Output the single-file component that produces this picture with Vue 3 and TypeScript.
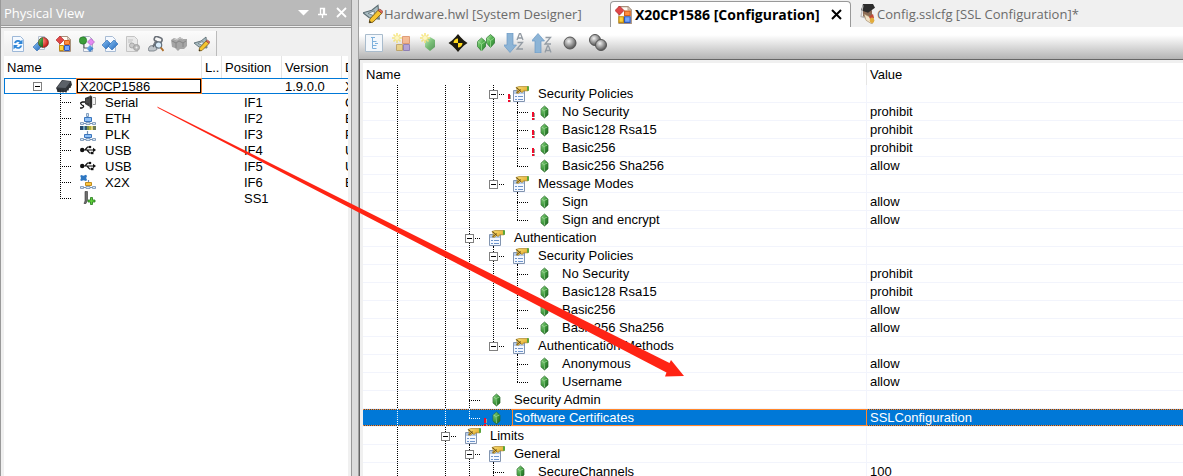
<script setup lang="ts">
import { ref } from 'vue'

interface Device {
  name: string
  icon: string
  position: string
  description: string
}

interface Setting {
  name: string
  value?: string
  level: number
  guides: number[]
  group?: boolean
  last?: boolean
  alert?: boolean
}

const physicalTools = [
  { icon: 'refresh', label: 'Refresh' },
  { icon: 'sphere', label: 'Add hardware' },
  { icon: 'config', label: 'Open configuration' },
  { icon: 'mapping', label: 'Open mapping' },
  { icon: 'modules', label: 'Open software' },
  { icon: 'page-gear', label: 'Page settings' },
  { icon: 'find', label: 'Find' },
  { icon: 'grey-chip', label: 'Replace module' },
  { icon: 'designer', label: 'System Designer' },
]

const configTools = [
  { icon: 'tree-page', label: 'Expand tree' },
  { icon: 'new-group', label: 'New group' },
  { icon: 'new-item', label: 'New item' },
  { icon: 'target', label: 'Go to' },
  { icon: 'gems', label: 'Show all' },
  { icon: 'sort-down', label: 'Sort ascending' },
  { icon: 'sort-up', label: 'Sort descending' },
  { icon: 'ball', label: 'Basic level' },
  { icon: 'balls', label: 'Advanced level' },
]

const devices: Device[] = [
  { name: 'Serial', icon: 'serial', position: 'IF1', description: 'C' },
  { name: 'ETH', icon: 'net', position: 'IF2', description: 'E' },
  { name: 'PLK', icon: 'plk', position: 'IF3', description: 'P' },
  { name: 'USB', icon: 'usb', position: 'IF4', description: 'U' },
  { name: 'USB', icon: 'usb', position: 'IF5', description: 'U' },
  { name: 'X2X', icon: 'x2x', position: 'IF6', description: 'E' },
  { name: '', icon: 'slot', position: 'SS1', description: '' },
]

const settings: Setting[] = [
  { name: 'Security Policies', level: 4, guides: [0, 2, 3], group: true, alert: true },
  { name: 'No Security', value: 'prohibit', level: 5, guides: [0, 2, 3, 4], alert: true },
  { name: 'Basic128 Rsa15', value: 'prohibit', level: 5, guides: [0, 2, 3, 4], alert: true },
  { name: 'Basic256', value: 'prohibit', level: 5, guides: [0, 2, 3, 4], alert: true },
  { name: 'Basic256 Sha256', value: 'allow', level: 5, guides: [0, 2, 3, 4], last: true },
  { name: 'Message Modes', level: 4, guides: [0, 2, 3], group: true, last: true },
  { name: 'Sign', value: 'allow', level: 5, guides: [0, 2, 3] },
  { name: 'Sign and encrypt', value: 'allow', level: 5, guides: [0, 2, 3], last: true },
  { name: 'Authentication', level: 3, guides: [0, 2], group: true },
  { name: 'Security Policies', level: 4, guides: [0, 2, 3], group: true },
  { name: 'No Security', value: 'prohibit', level: 5, guides: [0, 2, 3, 4] },
  { name: 'Basic128 Rsa15', value: 'prohibit', level: 5, guides: [0, 2, 3, 4] },
  { name: 'Basic256', value: 'allow', level: 5, guides: [0, 2, 3, 4] },
  { name: 'Basic256 Sha256', value: 'allow', level: 5, guides: [0, 2, 3, 4], last: true },
  { name: 'Authentication Methods', level: 4, guides: [0, 2, 3], group: true, last: true },
  { name: 'Anonymous', value: 'allow', level: 5, guides: [0, 2, 3] },
  { name: 'Username', value: 'allow', level: 5, guides: [0, 2, 3], last: true },
  { name: 'Security Admin', level: 3, guides: [0, 2] },
  { name: 'Software Certificates', value: 'SSLConfiguration', level: 3, guides: [0, 2], last: true, alert: true },
  { name: 'Limits', level: 2, guides: [0], group: true },
  { name: 'General', level: 3, guides: [0, 2], group: true },
  { name: 'SecureChannels', value: '100', level: 4, guides: [0, 2, 3] },
]

const selected = ref(18)
</script>

<template>
  <div class="workspace">
    <svg class="sprite" aria-hidden="true">
      <defs>
        <linearGradient id="g-blue" x1="0" y1="0" x2="1" y2="1"><stop offset="0" stop-color="#8cc4f5" /><stop offset="1" stop-color="#1d63b8" /></linearGradient>
        <linearGradient id="g-green" x1="0" y1="0" x2="1" y2="1"><stop offset="0" stop-color="#a5e59b" /><stop offset="0.5" stop-color="#3c9a3a" /><stop offset="1" stop-color="#1c5c22" /></linearGradient>
        <linearGradient id="g-gem" x1="0" y1="0" x2="1" y2="1"><stop offset="0" stop-color="#b4e8aa" /><stop offset="0.5" stop-color="#4fb04c" /><stop offset="1" stop-color="#2b7c30" /></linearGradient>
        <linearGradient id="g-gold" x1="0" y1="0" x2="1" y2="1"><stop offset="0" stop-color="#ffe680" /><stop offset="1" stop-color="#d99a12" /></linearGradient>
        <radialGradient id="g-ball" cx="0.4" cy="0.35" r="0.6"><stop offset="0" stop-color="#f2f2f2" /><stop offset="0.6" stop-color="#9a9a9a" /><stop offset="1" stop-color="#606060" /></radialGradient>
        <radialGradient id="g-red" cx="0.35" cy="0.35" r="0.7"><stop offset="0" stop-color="#ff9a8a" /><stop offset="1" stop-color="#c4110f" /></radialGradient>
      </defs>
      <symbol id="i-refresh" viewBox="0 0 16 16">
        <path d="M2.500.5h8l3 3v12h-11z" fill="#f4f9ff" stroke="#9db8d8" />
        <path d="M4 7a4.300 4.300 0 0 1 7-2l1.500-1.500V8H8l1.600-1.600A2.600 2.600 0 0 0 5.800 7.200z" fill="#2f86d8" />
        <path d="M12.200 9.500a4.300 4.300 0 0 1-7 2.300L3.500 13.500V9H8l-1.500 1.500a2.600 2.600 0 0 0 3.800-1z" fill="#2f86d8" />
      </symbol>
      <symbol id="i-sphere" viewBox="0 0 16 16">
        <path d="M5.500.5h6v13h-6z" fill="#f5f7fb" stroke="#b4bfd0" />
        <path d="M0 11l5-5 4 4-5 5z" fill="url(#g-blue)" stroke="#2a66ac" stroke-width=".6" />
        <circle cx="10.500" cy="6.500" r="5" fill="url(#g-red)" />
        <path d="M10 1.500a5 5 0 0 0 0 10z" fill="url(#g-green)" />
        <circle cx="10.500" cy="6.500" r="5" fill="none" stroke="#5b2a20" stroke-width=".6" />
      </symbol>
      <symbol id="i-config" viewBox="0 0 16 16">
        <path d="M3.500.5h8l3 3v12h-11z" fill="#fffaf2" stroke="#a8907c" />
        <path d="M11.500.5v3h3z" fill="#e0d4c8" stroke="#a8907c" stroke-width=".6" />
        <path d="M4 0l4 4-4 4-4-4z" fill="#df4747" stroke="#a71f24" stroke-width=".6" />
        <path d="M8.500 4.500h5v4h-5z" fill="#ff8d40" stroke="#d2601a" />
        <path d="M3.500 9.500h4v5h-4z" fill="#ffd23c" stroke="#bf8b13" />
        <path d="M8.500 9.500h5v5h-5z" fill="#74a7ff" stroke="#3059b8" />
      </symbol>
      <symbol id="i-mapping" viewBox="0 0 16 16">
        <path d="M4.500.5h6l3 3v12h-9z" fill="#f5f7fb" stroke="#a9b3c4" />
        <circle cx="4" cy="4.500" r="3.700" fill="#3c9e3a" stroke="#1f6a22" stroke-width=".6" />
        <path d="M12 2.500l3.500 3.500L12 9.500 8.500 6z" fill="#e48af0" stroke="#a84bb8" stroke-width=".6" />
        <path d="M5 8v4h5" fill="none" stroke="#555" />
        <path d="M11 9l3.500 3.500L11 16l-3.500-3.500z" fill="url(#g-blue)" />
      </symbol>
      <symbol id="i-modules" viewBox="0 0 16 16">
        <path d="M3.500.5h7l3 3v12h-10z" fill="#f5f9ff" stroke="#a9bcd4" />
        <path d="M0 9l5-5 4 4-5 5z" fill="url(#g-blue)" stroke="#2768b4" stroke-width=".6" />
        <path d="M6 10l6-6 4 4-6 6z" fill="url(#g-blue)" stroke="#2768b4" stroke-width=".6" />
      </symbol>
      <symbol id="i-page-gear" viewBox="0 0 16 16">
        <path d="M1.500.5h8l3 3v12h-11z" fill="#e9e9e9" stroke="#c4c4c4" />
        <path d="M3 4h5M3 6h4" stroke="#c0c0c0" />
        <circle cx="7" cy="9.500" r="2.500" fill="#c8c8c8" stroke="#a8a8a8" />
        <circle cx="11.500" cy="11.500" r="3" fill="#b8b8b8" stroke="#a0a0a0" />
        <circle cx="11.500" cy="11.500" r="1" fill="#eee" />
      </symbol>
      <symbol id="i-find" viewBox="0 0 16 16">
        <rect x="6" y="1" width="8" height="5" rx="2.500" fill="none" stroke="#6a7078" stroke-width="1.600" transform="rotate(20 10 4)" />
        <path d="M0 13l2-3 3-.5 2-4 3 1-2 4 1 3-3 1.500H1z" fill="#bfc5ca" stroke="#70767e" stroke-width=".8" />
        <path d="M5 11l4-6" stroke="#61676f" stroke-width="1.400" />
        <circle cx="10.500" cy="9" r="3.200" fill="#d8ecfb" stroke="#64727e" stroke-width="1.200" />
        <path d="M12.800 11.500l2.700 3.500" stroke="#b06f2a" stroke-width="2" />
      </symbol>
      <symbol id="i-grey-chip" viewBox="0 0 16 16">
        <path d="M0 4l3-2 3 1 3-2 3 2h4v7l-3 3H9l-2 2-3-3-3-1z" fill="#a5a5a5" />
        <path d="M1 5l4 2 3-2 4 2 3-2M5 7v5M12 7v4" stroke="#868686" fill="none" />
        <path d="M3 3l3 1 3-2 3 1" stroke="#c8c8c8" fill="none" />
      </symbol>
      <symbol id="i-designer" viewBox="0 0 16 16">
        <path d="M0 7l7-2 5-4 1 11-8-1z" fill="#a9bcc2" stroke="#5c6d73" stroke-width=".9" />
        <path d="M4 7.500l5-2v4z" fill="#edf3f5" stroke="#5c6d73" stroke-width=".6" />
        <path d="M12 5l3 2.500-7 7L5 15l.5-3z" fill="#f7c531" stroke="#80611a" stroke-width=".8" />
        <path d="M12 5l3 2.500 1-1.500-2.500-2z" fill="#e26b58" stroke="#80403a" stroke-width=".5" />
        <path d="M5 15l.3-1.800 1.400 1.500z" fill="#222" />
      </symbol>
      <symbol id="i-tree-page" viewBox="0 0 20 20">
        <path d="M1.500 1.500h17v17h-17z" fill="#f4f8fc" stroke="#a9bccd" />
        <path d="M7 4.500h4M8.500 4.500v11M8.500 8.500h4M8.500 12.500h4M8.500 15.500h4M11 10.500h3" fill="none" stroke="#7eb1dc" />
      </symbol>
      <symbol id="i-new-group" viewBox="0 0 20 20">
        <g opacity=".72">
          <path d="M10.500 3.500h7v7h-7z" fill="#f6a876" stroke="#d67c4a" />
          <path d="M4.500 11.500h6v6h-6z" fill="#efce6a" stroke="#b69448" />
          <path d="M11.500 11.500h6v6h-6z" fill="#a78fd4" stroke="#7663aa" />
          <path d="M5 0v10M0 5h10M1.500 1.500l7 7M8.500 1.500l-7 7" stroke="#f5df58" stroke-width="1.600" />
          <circle cx="5" cy="5" r="2" fill="#fff8b8" />
        </g>
      </symbol>
      <symbol id="i-new-item" viewBox="0 0 20 20">
        <g opacity=".72">
          <path d="M10 4l5 3v7l-5 4-5-4V7z" fill="url(#g-gem)" />
          <path d="M5 0v10M0 5h10M1.500 1.500l7 7M8.500 1.500l-7 7" stroke="#f5df58" stroke-width="1.600" />
          <circle cx="5" cy="5" r="2" fill="#fff8b8" />
        </g>
      </symbol>
      <symbol id="i-target" viewBox="0 0 20 20">
        <path d="M10 1l2.500 3 3.500 3.500 3.500 2.500-3.500 2.500-3.500 3.500-2.500 3-2.500-3L4 12.500.5 10 4 7.500 7.500 4z" fill="#1d1b12" />
        <path d="M10 10V5.500A4.500 4.500 0 0 0 5.500 10zM10 10v4.500a4.500 4.500 0 0 0 4.500-4.500z" fill="#ffd91c" />
      </symbol>
      <symbol id="i-gems" viewBox="0 0 20 20">
        <path d="M14.500 1.500L18.500 5v5l-4 4.500-4-4.500V5z" fill="url(#g-gem)" stroke="#27742b" stroke-width=".7" />
        <path d="M5.500 5l4 3.500v5l-4 4.500-4-4.500v-5z" fill="url(#g-gem)" stroke="#27742b" stroke-width=".7" />
        <path d="M10.500 5l4 2.500 4-2.500M14.500 7.500v7M1.500 8.500l4 2.500 4-2.500M5.500 11v7" fill="none" stroke="#a2e09a" stroke-width=".7" />
      </symbol>
      <symbol id="i-sort-down" viewBox="0 0 20 20">
        <path d="M3 0h6v12h3.500L6 19.500-.5 12H3z" fill="#8cb4d6" stroke="#6c9ac4" stroke-width=".7" />
        <path d="M13 7l2.500-6.500h1L19 7M14 5h4M13.500 9.500h5L13 16h6" fill="none" stroke="#939ba3" stroke-width="1.300" />
      </symbol>
      <symbol id="i-sort-up" viewBox="0 0 20 20">
        <path d="M3 20h6V8h3.500L6 .5-.5 8H3z" fill="#8cb4d6" stroke="#6c9ac4" stroke-width=".7" />
        <path d="M13.500 4.500h5L13 11h6M13 19.500l2.500-6.500h1l2.500 6.500M14 17.500h4" fill="none" stroke="#939ba3" stroke-width="1.300" />
      </symbol>
      <symbol id="i-ball" viewBox="0 0 20 20">
        <circle cx="10" cy="10" r="6" fill="url(#g-ball)" stroke="#555" />
      </symbol>
      <symbol id="i-balls" viewBox="0 0 20 20">
        <circle cx="7" cy="7" r="5.500" fill="url(#g-ball)" stroke="#555" />
        <circle cx="13" cy="12" r="5.500" fill="url(#g-ball)" stroke="#555" />
      </symbol>
      <symbol id="i-cert" viewBox="0 0 16 16">
        <path d="M3 5h9v5l-4 3-5-3z" fill="#8a6a54" />
        <path d="M3 0h10l2 3-7 4L1 5z" fill="#2c2c2c" />
        <path d="M3 1l-2 9 4 1" stroke="#bbb" stroke-width="1.200" fill="none" />
        <path d="M4 8l5 2 5 3-2 3-6-3z" fill="#f1e2c6" stroke="#a48c6c" stroke-width=".6" />
        <path d="M9 10l4-2 1 3-3 3z" fill="#c44a36" />
        <circle cx="12" cy="13" r="2.200" fill="#e3ad3c" />
      </symbol>
      <symbol id="i-cpu" viewBox="0 0 16 16">
        <path d="M0 10l6-8 9 1 1 4-6 7-8 0z" fill="#33373c" />
        <path d="M1 9.500L6.500 2.500l8 1L9.500 10z" fill="#5b6168" />
        <path d="M2 11v3M4.500 11.500v3M7 11.500v3M10 12v2.500M12 9.500v3M14 7v3" stroke="#25282c" stroke-width="1.300" />
      </symbol>
      <symbol id="i-serial" viewBox="0 0 16 16">
        <path d="M5 4l5-2v11l-5-3z" fill="#3a3a3a" />
        <path d="M10 1.500l2 1v11l-2 1zM6 6h3M6 8h3" fill="#111" stroke="#777" stroke-width=".6" />
        <path d="M13 3.500h2.500v7H13" fill="#f4f4f4" stroke="#999" />
        <path d="M5 8H2.500Q0 8.500 1 10t2 1.500q1.500 1.500-1 2.500H0" fill="none" stroke="#111" stroke-width="1.300" />
      </symbol>
      <symbol id="i-net" viewBox="0 0 16 16">
        <path d="M7.500 5v3M0 13.500h16" stroke="#7390b3" stroke-width="1.200" />
        <path d="M6.500 3.500h2v3h-2z" fill="#cfe0f2" stroke="#6f8fb4" stroke-width=".8" />
        <path d="M4.500 7.500h7v4h-7z" fill="#8fc0f5" stroke="#3d76bd" />
        <path d="M.5 12.500h3v2h-3zM12.500 12.500h3v2h-3zM6 12.500h4v2H6z" fill="#d9e6f3" stroke="#7390b3" stroke-width=".8" />
      </symbol>
      <symbol id="i-plk" viewBox="0 0 16 16">
        <path d="M0 0h3v4H0z" fill="#27496d" /><path d="M3 0h2v4H3z" fill="#6ea0b8" /><path d="M5 0h2v4H5z" fill="#31576e" /><path d="M7 0h2v4H7z" fill="#7b9148" /><path d="M9 0h2v4H9z" fill="#b7ae38" /><path d="M11 0h2v4h-2z" fill="#e2d67c" /><path d="M13 0h3v4h-3z" fill="#6d7b55" />
        <path d="M7.500 5v3M0 13.500h16" stroke="#7390b3" stroke-width="1.200" />
        <path d="M4.500 8.500h7v3h-7z" fill="#8fc0f5" stroke="#3d76bd" />
        <path d="M.5 12.500h3v2h-3zM12.500 12.500h3v2h-3zM6 12.500h4v2H6z" fill="#d9e6f3" stroke="#7390b3" stroke-width=".8" />
      </symbol>
      <symbol id="i-usb" viewBox="0 0 16 16">
        <circle cx="2.200" cy="8" r="2.200" fill="#111" />
        <path d="M2 8h12M5 8l2.500-3H10M7 8l2.500 3H12" fill="none" stroke="#111" stroke-width="1.200" />
        <path d="M13 5.800L16 8l-3 2.200z" fill="#111" />
        <circle cx="10" cy="5" r="1.300" fill="#111" /><path d="M11 9.800h2.500v2.400H11z" fill="#111" />
      </symbol>
      <symbol id="i-x2x" viewBox="0 0 16 16">
        <path d="M1 1l2.500.8L6 .8 7 2l-.8 2L7 6 6 7l-2.500-.8L1 7 .3 6 1 4 .3 2z" fill="#2e77c2" />
        <path d="M8.500 6v3M0 13.500h16" stroke="#7390b3" stroke-width="1.200" />
        <path d="M5.500 8.500h6v3h-6z" fill="#ffc840" stroke="#c08c20" />
        <path d="M.5 12.500h3v2h-3zM12.500 12.500h3v2h-3zM6 12.500h4v2H6z" fill="#d9e6f3" stroke="#7390b3" stroke-width=".8" />
      </symbol>
      <symbol id="i-slot" viewBox="0 0 16 16">
        <path d="M5 1.500h2.500V10l-1.500 3.500H4L5 11z" fill="#6e6e6e" stroke="#333" stroke-width=".6" />
        <path d="M10.500 7.500h2v2.500H15v2h-2.500v2.500h-2V12H8v-2h2.500z" fill="#5ed039" stroke="#23761c" stroke-width=".8" />
      </symbol>
      <symbol id="i-group" viewBox="0 0 16 16">
        <path d="M.5 4.500h11v11H.5z" fill="#f4f8ff" stroke="#8295b0" />
        <path d="M1 5h10v3H1z" fill="#b5cbe8" />
        <path d="M2 10.500h2M5 10.500h5M2 13.500h2M5 13.500h5" stroke="#6e95cc" />
        <path d="M3 1.500L6 .6h9v4.200h-4L9 6.500l-1.500-1L5 7.500l-1.500-1 1-2z" fill="url(#g-gold)" stroke="#a37d1e" stroke-width=".7" />
        <path d="M3.500 1.500l4.500 4M3.500 7l4-3.500" stroke="#5e4816" />
        <path d="M14 .3h2v4.500h-2z" fill="#5aa53b" />
      </symbol>
      <symbol id="i-leaf" viewBox="0 0 16 16">
        <path d="M7.500 2l3.500 3v6l-3.500 3L4 11V5z" fill="url(#g-green)" stroke="#2b6b2d" stroke-width=".7" />
        <path d="M4.500 5l2.500 1.500L7.500 13M7 6.500L10.500 5" fill="none" stroke="#a9dba4" stroke-width=".7" />
      </symbol>
    </svg>

    <section class="physical" aria-label="Physical View">
      <header class="caption">
        <span class="caption-text">Physical View</span>
        <button type="button" aria-label="Window position"><svg width="13" height="13" viewBox="0 0 13 13"><path d="M1 4h11L6.500 9.500z" fill="#fff" /></svg></button>
        <button type="button" aria-label="Auto hide"><svg width="13" height="13" viewBox="0 0 13 13"><path d="M4.500 8V2.500h4V8M7.500 2.500V8M2 8.500h9M6.500 9v3" fill="none" stroke="#fff" stroke-width="1.300" /></svg></button>
        <button type="button" aria-label="Close"><svg width="13" height="13" viewBox="0 0 13 13"><path d="M2 2l9 9M11 2l-9 9" stroke="#fff" stroke-width="1.800" /></svg></button>
      </header>
      <div class="physical-tools" role="toolbar" aria-label="Physical View tools">
        <div class="tool-strip">
          <button v-for="tool in physicalTools" :key="tool.icon" type="button" :aria-label="tool.label">
            <svg width="16" height="16"><use :href="'#i-' + tool.icon" /></svg>
          </button>
        </div>
      </div>
      <div class="physical-body">
        <table class="devices">
          <colgroup><col class="c-name" /><col class="c-l" /><col class="c-pos" /><col class="c-pos" /><col class="c-pos" /></colgroup>
          <thead>
            <tr><th>Name</th><th>L..</th><th>Position</th><th>Version</th><th>D</th></tr>
          </thead>
          <tbody>
            <tr class="root">
              <td>
                <div class="node">
                  <span class="cell plain"><button class="expander" type="button" aria-label="Collapse X20CP1586"></button></span>
                  <svg class="root-icon" width="16" height="16"><use href="#i-cpu" /></svg>
                  <span class="root-label">X20CP1586</span>
                </div>
              </td>
              <td></td><td></td><td class="version">1.9.0.0</td><td>X</td>
            </tr>
            <tr v-for="(device, i) in devices" :key="device.position">
              <td>
                <div class="node child">
                  <span class="cell branch" :class="{ last: i === devices.length - 1 }"></span>
                  <svg class="child-icon" width="16" height="16"><use :href="'#i-' + device.icon" /></svg>
                  <span class="child-label">{{ device.name }}</span>
                </div>
              </td>
              <td></td><td class="position">{{ device.position }}</td><td></td><td>{{ device.description }}</td>
            </tr>
          </tbody>
        </table>
      </div>
    </section>

    <div class="splitter"></div>

    <main class="editor">
      <div class="tabs" role="tablist">
        <button class="tab first" type="button" role="tab" aria-selected="false">
          <svg width="20" height="20"><use href="#i-designer" /></svg>Hardware.hwl [System Designer]
        </button>
        <div class="tab active">
          <button type="button" role="tab" aria-selected="true"><svg width="18" height="18"><use href="#i-config" /></svg>X20CP1586 [Configuration]</button>
          <button class="tab-close" type="button" aria-label="Close tab"><svg width="11" height="11" viewBox="0 0 11 11"><path d="M1 1l9 9M10 1l-9 9" stroke="#000" stroke-width="2" /></svg></button>
        </div>
        <button class="tab" type="button" role="tab" aria-selected="false">
          <svg width="16" height="20" viewBox="0 0 16 16" preserveAspectRatio="none"><use href="#i-cert" width="16" height="16" /></svg>Config.sslcfg [SSL Configuration]*
        </button>
      </div>
      <div class="editor-tools" role="toolbar" aria-label="Configuration tools">
        <button v-for="tool in configTools" :key="tool.icon" type="button" :aria-label="tool.label">
          <svg width="20" height="20"><use :href="'#i-' + tool.icon" /></svg>
        </button>
      </div>
      <div class="editor-body">
        <table class="settings">
          <colgroup><col class="c-setting" /><col /></colgroup>
          <thead>
            <tr><th>Name</th><th>Value</th></tr>
          </thead>
          <tbody>
            <tr v-for="(row, i) in settings" :key="i" :class="{ selected: i === selected }" @click="selected = i">
              <td>
                <div class="node setting">
                  <span v-for="n in row.level" :key="n" class="cell" :class="{ full: row.guides.includes(n - 1) }"></span>
                  <span class="cell branch" :class="{ last: row.last }">
                    <button v-if="row.group" class="expander" type="button" :aria-label="'Collapse ' + row.name"></button>
                  </span>
                  <span class="glyph" :class="{ stem: row.group }">
                    <svg width="16" height="16"><use :href="row.group ? '#i-group' : '#i-leaf'" /></svg>
                    <svg v-if="row.alert" class="alert" width="3" height="8" viewBox="0 0 3 8"><path d="M2 1h1v4H2zM2 6h1v2H2z" fill="#9aa59a" /><path d="M0 0h2v5H0zM0 6h2v2H0z" fill="#f00c2c" /></svg>
                  </span>
                  <span class="label">{{ row.name }}</span>
                </div>
              </td>
              <td>{{ row.value }}</td>
            </tr>
          </tbody>
        </table>
      </div>
    </main>

    <svg class="pointer" viewBox="0 0 1183 476" width="1183" height="476" aria-hidden="true">
      <path d="M157 106.500L669.500 363l1.500-3L684 376l-19 .5 1.500-4L158 108z" fill="#ff2414" />
    </svg>
  </div>
</template>

<style>
body {
  margin: 0;
}
</style>

<style scoped>
.workspace {
  --dots-v: repeating-linear-gradient(to bottom, #000 0 1px, transparent 1px 2px);
  --dots-h: repeating-linear-gradient(to right, #000 0 1px, transparent 1px 2px);
  position: relative;
  display: flex;
  height: 100vh;
  overflow: hidden;
  background: #f0f0f0;
  color: #000;
  font: 13px/16px "Liberation Sans", Arial, sans-serif;
}
.sprite {
  position: absolute;
  width: 0;
  height: 0;
}
button {
  display: flex;
  align-items: center;
  justify-content: center;
  margin: 0;
  padding: 0;
  border: 0;
  background: none;
  color: inherit;
  font: inherit;
}
svg {
  display: block;
  flex: none;
}
table {
  table-layout: fixed;
  border-spacing: 0;
}
th,
td {
  padding: 0;
  overflow: hidden;
  font-weight: normal;
  text-align: left;
  white-space: nowrap;
}

/* Physical view */
.physical {
  display: flex;
  flex: none;
  flex-direction: column;
  box-sizing: border-box;
  width: 352px;
  border-left: 1px solid #999;
  border-right: 1px solid #999;
}
.caption {
  display: flex;
  align-items: center;
  height: 25px;
  border-bottom: 1px solid #9a9a9a;
  background: #bababa;
  color: #fff;
  font: 13px/16px "Open Sans", "Noto Sans", sans-serif;
}
.caption-text {
  flex: 1;
  padding-left: 3px;
}
.caption button {
  width: 19px;
  height: 19px;
}
.physical-tools {
  box-sizing: border-box;
  height: 29px;
  margin-top: 1px;
  padding: 3px 3px 0;
  border-top: 1px solid #999;
}
.tool-strip {
  box-sizing: border-box;
  display: flex;
  width: 213px;
  height: 25px;
  padding-left: 2px;
  border-right: 1px solid #bbb;
  background: linear-gradient(#fbfbfb, #ececec);
}
.tool-strip button {
  width: 23px;
}
.physical-body {
  flex: 1;
  margin: 0 3px;
  overflow: hidden;
  background: #fff;
}
.devices {
  width: 398px;
}
.c-name {
  width: 198px;
}
.c-l {
  width: 20px;
}
.c-pos {
  width: 60px;
}
.devices th {
  box-sizing: border-box;
  height: 22px;
  padding: 2px 0 0 3px;
  border-right: 1px solid #e5e5e5;
}
.devices td {
  box-sizing: border-box;
  height: 16px;
  line-height: 14px;
}
.devices td:not(:first-child) {
  padding-top: 2px;
}
.devices td:last-child,
.devices .version {
  padding-left: 3px;
}
.devices .position {
  padding-left: 22px;
}
.root td {
  box-shadow: inset 0 1px #0078d7, inset 0 -1px #0078d7;
}
.root td:first-child {
  box-shadow: inset 0 1px #0078d7, inset 0 -1px #0078d7, inset 1px 0 #0078d7;
}
.node {
  display: flex;
  align-items: center;
  height: 16px;
}
.root .node {
  padding-left: 21px;
}
.node.child {
  padding-left: 44px;
}
.root-icon {
  margin: 0 4px 0 7px;
}
.root-label {
  flex: 1;
  box-sizing: border-box;
  height: 16px;
  padding-left: 2px;
  border: 2px solid #000;
  outline: 1px solid #f08030;
  outline-offset: -1px;
  line-height: 14px;
}
.child-icon {
  margin: 0 9px 0 8px;
}
.child-label {
  padding-top: 2px;
}

/* Tree lines */
.cell {
  display: flex;
  flex: none;
  align-items: center;
  justify-content: center;
  width: 24px;
  height: 100%;
}
.cell.full {
  background: var(--dots-v) 12px 0 / 1px 100% no-repeat;
}
.cell.branch {
  background:
    var(--dots-v) 12px 0 / 1px 100% no-repeat,
    var(--dots-h) 12px 50% / 12px 1px no-repeat;
}
.cell.branch.last {
  background:
    var(--dots-v) 12px 0 / 1px 50% no-repeat,
    var(--dots-h) 12px 50% / 12px 1px no-repeat;
}
.expander {
  width: 9px;
  height: 9px;
  margin: 1px 0 0 1px;
  border: 1px solid #808080;
  background: linear-gradient(#000, #000) center / 5px 1px no-repeat #fff;
}

.splitter {
  box-sizing: border-box;
  flex: none;
  width: 7px;
  border-right: 1px solid #a0a0a0;
  background: #dcdcdc;
}

/* Editor */
.editor {
  display: flex;
  flex: 1;
  flex-direction: column;
  min-width: 0;
}
.tabs {
  display: flex;
  flex: none;
  height: 27px;
  color: #6b6b6b;
  font: 13px/18px "Open Sans", "Noto Sans", sans-serif;
  white-space: nowrap;
}
.tab {
  gap: 1px;
  padding-left: 9px;
}
.tab.first {
  width: 251px;
  padding-left: 4px;
  justify-content: flex-start;
}
.tab.active {
  display: flex;
  box-sizing: border-box;
  width: 241px;
  margin-top: 1px;
  padding: 0 8px 0 4px;
  justify-content: space-between;
  border: 1px solid #999;
  border-bottom: 0;
  border-radius: 4px 4px 0 0;
  background: #fff;
  color: #000;
  font-size: 14px;
  font-weight: bold;
}
.tab.active button {
  gap: 2px;
}
.editor-tools {
  display: flex;
  flex: none;
  height: 32px;
  padding-left: 1px;
  border-bottom: 1px solid #666;
  background: linear-gradient(#fff 0 25%, #b4b4b4);
}
.editor-tools button {
  width: 28px;
}
.editor-body {
  flex: 1;
  min-height: 0;
  padding: 3px 0 0 3px;
  overflow: hidden;
  border-left: 1px solid #666;
}
.settings {
  width: 100%;
  background: #fff;
}
.c-setting {
  width: 504px;
}
.settings th {
  box-sizing: border-box;
  height: 22px;
  padding: 2px 0 0 3px;
}
.settings th:first-child {
  box-shadow: inset -1px 0 #e5e5e5;
}
.settings td {
  height: 18px;
  box-shadow: inset 0 -1px #f2f4fc;
  line-height: 18px;
}
.settings td:first-child {
  box-shadow: inset -1px -1px #f2f4fc;
}
.settings td:last-child {
  padding-left: 3px;
}
.node.setting {
  height: 18px;
  padding-left: 22px;
}
.glyph {
  position: relative;
  flex: none;
  width: 19px;
  height: 16px;
  padding: 1px 4px 1px 8px;
}
.glyph.stem {
  background: var(--dots-v) 12px 17px / 1px 1px no-repeat;
}
.alert {
  position: absolute;
  left: 3px;
  top: 9px;
}
.label {
  flex: 1;
  box-sizing: border-box;
  height: 17px;
  margin-bottom: 1px;
  padding-left: 1px;
  border: 1px solid transparent;
  line-height: 16px;
}
.selected {
  --dots-v: repeating-linear-gradient(to bottom, #fff 0 1px, transparent 1px 2px);
  --dots-h: repeating-linear-gradient(to right, #fff 0 1px, transparent 1px 2px);
  --edge: repeating-linear-gradient(to right, #ff872d 0 1px, #24506e 1px 2px);
  color: #fff;
}
.selected td {
  background:
    var(--edge) 0 0 / 100% 1px no-repeat,
    var(--edge) 0 16px / 100% 1px no-repeat,
    linear-gradient(#0078d7, #0078d7) 0 0 / 100% 17px no-repeat;
}
.selected .label {
  border-color: #ff872d;
}
.pointer {
  position: absolute;
  left: 0;
  top: 0;
  pointer-events: none;
}
</style>
